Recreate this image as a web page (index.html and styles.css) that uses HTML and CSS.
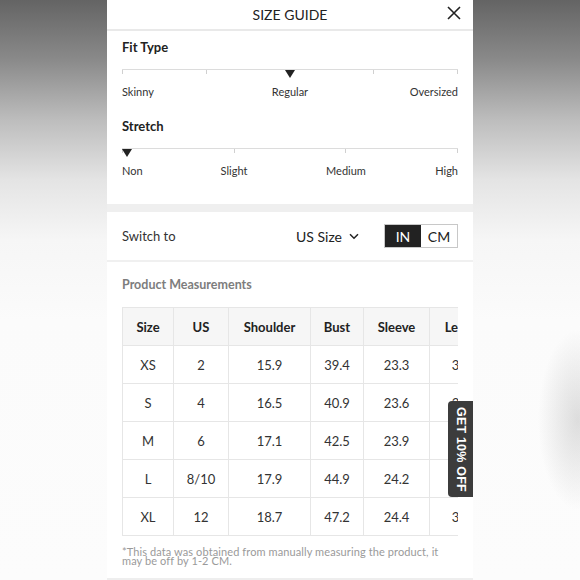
FILE: index.html
```html
<!DOCTYPE html>
<html>
<head>
<meta charset="utf-8">
<link rel="stylesheet" href="styles.css">
</head>
<body>
<div class="panel">
  <div class="header">
    <span class="title">SIZE GUIDE</span>
    <svg class="close" width="14" height="14" viewBox="0 0 14 14"><path d="M1 1L13 13M13 1L1 13" stroke="#222" stroke-width="1.6" fill="none"/></svg>
  </div>

  <div class="fit">
    <div class="fit-title">Fit Type</div>
    <div class="scale">
      <div class="track">
        <span class="tick"></span><span class="tick"></span><span class="tick"></span><span class="tick"></span><span class="tick"></span>
      </div>
      <span class="marker" style="left: 50%"></span>
    </div>
    <div class="labels four">
      <span class="l-first">Skinny</span>
      <span class="l-mid span2">Regular</span>
      <span class="l-last">Oversized</span>
    </div>

    <div class="fit-title stretch-title">Stretch</div>
    <div class="scale">
      <div class="track">
        <span class="tick"></span><span class="tick"></span><span class="tick"></span><span class="tick"></span>
      </div>
      <span class="marker" style="left: 1.5%"></span>
    </div>
    <div class="labels six">
      <span class="l-first">Non</span>
      <span class="l-mid span2">Slight</span>
      <span class="l-mid span2">Medium</span>
      <span class="l-last">High</span>
    </div>
  </div>

  <div class="band"></div>

  <div class="switch">
    <span class="switch-label">Switch to</span>
    <span class="select">US Size
      <svg width="10" height="7" viewBox="0 0 10 7"><path d="M1 1.2L5 5.2L9 1.2" stroke="#222" stroke-width="1.5" fill="none"/></svg>
    </span>
    <span class="toggle"><span class="opt on">IN</span><span class="opt">CM</span></span>
  </div>

  <div class="measure">
    <div class="m-title">Product Measurements</div>
    <div class="table-wrap">
      <table>
        <colgroup><col class="c1"><col class="c2"><col class="c3"><col class="c4"><col class="c5"><col class="c6"></colgroup>
        <thead>
          <tr><th>Size</th><th>US</th><th>Shoulder</th><th>Bust</th><th>Sleeve</th><th>Length</th></tr>
        </thead>
        <tbody>
          <tr><td>XS</td><td>2</td><td>15.9</td><td>39.4</td><td>23.3</td><td>33.1</td></tr>
          <tr><td>S</td><td>4</td><td>16.5</td><td>40.9</td><td>23.6</td><td>33.5</td></tr>
          <tr><td>M</td><td>6</td><td>17.1</td><td>42.5</td><td>23.9</td><td>33.9</td></tr>
          <tr><td>L</td><td>8/10</td><td>17.9</td><td>44.9</td><td>24.2</td><td>34.3</td></tr>
          <tr><td>XL</td><td>12</td><td>18.7</td><td>47.2</td><td>24.4</td><td>34.6</td></tr>
        </tbody>
      </table>
    </div>
    <p class="note">*This data was obtained from manually measuring the product, it may be off by 1-2 CM.</p>
  </div>
  <div class="bottom-line"></div>

  <div class="promo">GET 10% OFF</div>
</div>
</body>
</html>
```

FILE: styles.css
```css
html, body {
  margin: 0;
  padding: 0;
}
body {
  width: 580px;
  height: 580px;
  overflow: hidden;
  font-family: Lato, "Open Sans", sans-serif;
  color: #222;
  background:
    radial-gradient(ellipse 40px 90px at 578px 420px, rgba(150,150,150,0.3), rgba(150,150,150,0) 100%),
    linear-gradient(to bottom, #646464 0px, #8a8a8a 60px, #bdbdbd 120px, #e4e4e4 180px, #f6f6f6 240px, #fbfbfb 320px, #fcfcfc 580px);
}
.panel {
  position: relative;
  width: 366px;
  height: 580px;
  margin: 0 auto;
  background: #fff;
  overflow: hidden;
}
.header {
  height: 29px;
  border-bottom: 2px solid #e9e9e9;
  display: flex;
  align-items: center;
  justify-content: center;
  position: relative;
}
.title {
  font-size: 14px;
  color: #222;
}
.close {
  position: absolute;
  right: 12px;
  top: 6px;
}
.fit {
  padding: 8px 15px 26px;
}
.fit-title {
  font-size: 13px;
  font-weight: 700;
  line-height: 16px;
  color: #222;
}
.stretch-title {
  margin-top: 19px;
}
.scale {
  position: relative;
  margin-top: 14px;
  height: 10px;
}
.track {
  border-top: 1px solid #dcdcdc;
  display: flex;
  justify-content: space-between;
}
.tick {
  width: 1px;
  height: 4px;
  background: #d0d0d0;
}
.marker {
  position: absolute;
  top: 1px;
  width: 0;
  height: 0;
  margin-left: -5px;
  border-left: 5px solid transparent;
  border-right: 5px solid transparent;
  border-top: 8px solid #222;
}
.labels {
  display: grid;
  margin-top: 6px;
  font-size: 11px;
  line-height: 14px;
  color: #333;
}
.labels.four { grid-template-columns: repeat(4, 1fr); }
.labels.six { grid-template-columns: repeat(6, 1fr); }
.span2 { grid-column: span 2; }
.l-first { text-align: left; }
.l-mid { text-align: center; }
.l-last { text-align: right; }

.band {
  height: 8px;
  background: #efefef;
}
.switch {
  height: 48px;
  display: flex;
  align-items: center;
  padding: 0 15px;
  border-bottom: 2px solid #f0f0f0;
}
.switch-label {
  font-size: 13px;
  color: #333;
  flex: 1;
}
.select {
  font-size: 14px;
  color: #222;
  display: flex;
  align-items: center;
  gap: 7px;
  margin-right: 25px;
}
.toggle {
  display: flex;
  height: 24px;
  border: 1px solid #c8c8c8;
  box-sizing: border-box;
}
.opt {
  width: 36px;
  display: flex;
  align-items: center;
  justify-content: center;
  font-size: 14px;
  color: #222;
}
.opt.on {
  background: #222;
  color: #fff;
}
.measure {
  padding: 0 15px;
}
.m-title {
  margin-top: 15px;
  font-size: 12.5px;
  font-weight: 700;
  line-height: 16px;
  color: #7d7d7d;
}
.table-wrap {
  margin-top: 14px;
  overflow: hidden;
}
table {
  border-collapse: collapse;
  table-layout: fixed;
  width: 377px;
}
.c1 { width: 51px; }
.c2 { width: 55px; }
.c3 { width: 82px; }
.c4 { width: 53px; }
.c5 { width: 66px; }
.c6 { width: 70px; }
th, td {
  border: 1px solid #e6e6e6;
  height: 37px;
  padding: 0;
  text-align: center;
  font-size: 13px;
}
th {
  background: #f6f6f6;
  font-weight: 700;
  color: #222;
}
td {
  color: #333;
}
.note {
  margin: 11px 0 0;
  font-size: 11px;
  line-height: 9px;
  color: #9a9a9a;
  letter-spacing: 0.1px;
  width: 330px;
}
.bottom-line {
  margin-top: 13px;
  height: 2px;
  background: #eeeeee;
}
.promo {
  position: absolute;
  right: 0;
  top: 401px;
  width: 25px;
  height: 96px;
  background: #3c3c3c;
  border-radius: 4px 0 0 4px;
  color: #fff;
  font-family: "Liberation Sans", Arial, sans-serif;
  font-weight: 700;
  font-size: 12.5px;
  writing-mode: vertical-rl;
  display: flex;
  align-items: center;
  justify-content: center;
  letter-spacing: 0.2px;
}
```
